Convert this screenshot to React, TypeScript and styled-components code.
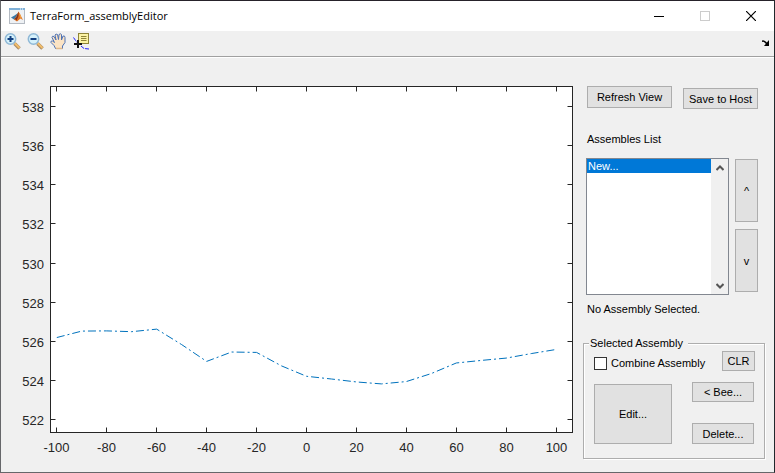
import React, { useState } from "react";
import styled, { createGlobalStyle } from "styled-components";

const face = "#f0f0f0";
const uiFont = `"Liberation Sans", Arial, sans-serif`;

const GlobalStyle = createGlobalStyle`
  * { box-sizing: border-box; }
  body { margin: 0; background: ${face}; }
`;

const Window = styled.div`
  display: flex;
  flex-direction: column;
  min-height: 100vh;
  background: ${face};
  border: 1px solid #66676a;
  border-top-color: #26222a;
  border-right-color: #20282c;
  font: 11px/14px ${uiFont};
  color: #000;
`;

const TitleBar = styled.header`
  display: flex;
  align-items: center;
  height: 30px;
  padding-left: 8px;
  background: #fff;
`;

const Title = styled.h1`
  flex: 1;
  margin: 0 0 0 5px;
  font: 11px/16px "Open Sans", "Noto Sans", sans-serif;
`;

const CaptionButton = styled.button`
  display: grid;
  place-items: center;
  width: 46px;
  height: 30px;
  padding: 0;
  border: 0;
  background: none;
`;

const Toolbar = styled.div`
  display: flex;
  align-items: center;
  gap: 6px;
  height: 26px;
  padding: 0 5px 4px 3px;
  border-bottom: 1px solid #a0a0a0;
  box-shadow: 0 1px 0 #fff;
`;

const ToolButton = styled.button<{ $end?: boolean }>`
  display: grid;
  place-items: center;
  padding: 0;
  border: 0;
  background: none;
  margin-left: ${(p) => (p.$end ? "auto" : "0")};
`;

const Body = styled.main`
  display: flex;
  flex: 1;
`;

const ChartPane = styled.section`
  flex: 1;
  min-width: 0;
  padding-top: 2px;
`;

const ChartSvg = styled.svg`
  display: block;
  width: 100%;
  height: auto;
`;

const TickText = styled.text`
  font: 13px ${uiFont};
  fill: #262626;
`;

const Side = styled.aside`
  width: 191px;
  padding: 29px 9px 12px 0;
`;

const PushButton = styled.button<{ $w: number; $h: number }>`
  width: ${(p) => p.$w}px;
  height: ${(p) => p.$h}px;
  padding: 0;
  border: 1px solid #adadad;
  background: #e1e1e1;
  color: #000;
  font: 11px/14px ${uiFont};
  white-space: nowrap;
`;

const TopButtons = styled.div`
  display: flex;
  align-items: flex-end;
  justify-content: space-between;
  height: 23px;
  padding: 0 7px 0 4px;
`;

const TopSlot = styled.div`
  align-self: flex-start;
  display: flex;
`;

const ListLabel = styled.label`
  display: block;
  margin: 23px 0 12px 4px;
`;

const ListRow = styled.div`
  display: flex;
  align-items: flex-start;
  justify-content: space-between;
  padding: 0 7px 0 3px;
`;

const ListFrame = styled.div`
  display: flex;
  width: 143px;
  height: 137px;
  border: 1px solid #828790;
  background: #fff;
`;

const ListBox = styled.select`
  flex: 1;
  min-width: 0;
  height: 100%;
  padding: 0;
  border: 0;
  outline: 0;
  border-radius: 0;
  background: #fff;
  overflow: hidden;
  font: 11px/14px ${uiFont};

  option {
    min-height: 14px;
    padding: 1px 1px 0;
  }

  option:checked {
    background-image: linear-gradient(#0078d7, #0078d7);
    -webkit-text-fill-color: #fff;
  }
`;

const ScrollTrack = styled.div`
  display: flex;
  flex-direction: column;
  justify-content: space-between;
  width: 17px;
  background: ${face};
`;

const ScrollButton = styled.button`
  display: grid;
  place-items: center;
  width: 17px;
  height: 17px;
  padding: 0;
  border: 0;
  background: none;
`;

const OrderButtons = styled.div`
  display: flex;
  flex-direction: column;
  gap: 7px;
  padding-top: 1px;
`;

const Status = styled.p`
  margin: 7px 0 20px 4px;
`;

const Group = styled.fieldset`
  min-width: 0;
  margin: 0;
  padding: 1px 9px 14px 10px;
  border: 1px solid #adadad;
  box-shadow: 1px 1px 0 #fff, inset 1px 1px 0 #fff;
`;

const Legend = styled.legend`
  margin-left: -5px;
  padding: 0 5px 0 1px;
  background: ${face};
`;

const GroupRow = styled.div`
  display: flex;
  align-items: center;
  justify-content: space-between;
`;

const CheckLabel = styled.label`
  display: flex;
  align-items: center;
  gap: 4px;
  padding-top: 4px;
  white-space: nowrap;
`;

const CheckBox = styled.input`
  appearance: none;
  width: 13px;
  height: 13px;
  margin: 0;
  border: 1px solid #333;
  background: #fff;

  &:checked {
    background: #333;
    box-shadow: inset 0 0 0 2px #fff;
  }
`;

const ActionRow = styled.div`
  display: flex;
  justify-content: space-between;
  align-items: flex-end;
  margin-top: 11px;
  padding-right: 1px;
`;

const ActionColumn = styled.div`
  display: flex;
  flex-direction: column;
  gap: 21px;
`;

const values = [
  526.19, 526.52, 526.53, 526.49, 526.62, 525.83, 524.97, 525.45, 525.43,
  524.74, 524.21, 524.07, 523.92, 523.82, 523.94, 524.35, 524.89, 525.02,
  525.14, 525.37, 525.58,
];
const plot = { left: 49.5, right: 571.5, top: 27.5, bottom: 373.5 };
const px = (x: number) => 305.5 + x * 2.497;
const py = (y: number) => 360.5 - (y - 522) * 19.56;
const xTicks = [-100, -80, -60, -40, -20, 0, 20, 40, 60, 80, 100];
const yTicks = [522, 524, 526, 528, 530, 532, 534, 536, 538];
const snap = (v: number) => Math.floor(v) + 0.5;

function Chart() {
  const points = values.map((v, i) => `${px(i * 10 - 100)},${py(v)}`).join(" ");
  return (
    <ChartSvg viewBox="0 0 582 412" role="img" aria-label="Terrain profile">
      <rect
        x={plot.left}
        y={plot.top}
        width={plot.right - plot.left}
        height={plot.bottom - plot.top}
        fill="#fff"
        stroke="#262626"
      />
      {xTicks.map((t) => {
        const x = snap(px(t));
        return (
          <g key={t}>
            <path
              d={`M${x} ${plot.bottom}v-5M${x} ${plot.top}v5`}
              stroke="#262626"
            />
            <TickText x={x} y={393} textAnchor="middle">
              {t}
            </TickText>
          </g>
        );
      })}
      {yTicks.map((t) => {
        const y = snap(py(t));
        return (
          <g key={t}>
            <path
              d={`M${plot.left} ${y}h5M${plot.right} ${y}h-5`}
              stroke="#262626"
            />
            <TickText x={43} y={y + 5} textAnchor="end">
              {t}
            </TickText>
          </g>
        );
      })}
      <polyline
        points={points}
        fill="none"
        stroke="#0072bd"
        strokeDasharray="8 3 2 3"
      />
    </ChartSvg>
  );
}

function AppIcon() {
  return (
    <svg width="16" height="16" viewBox="0 0 16 16" aria-hidden="true">
      <rect x=".5" y=".5" width="15" height="15" fill="#eef1f4" stroke="#b4bac2" />
      <path d="M0 0h16v2H0z" fill="#7fb0d8" />
      <path d="M11 1h1M13 1h1" stroke="#fff" />
      <path d="M2 9.500 5.500 7.500 9 5 7.500 9 5 11.500z" fill="#3a78a8" />
      <path d="M5 11.500 7 9 9.500 3.500 11 6 14 12 11.500 10.500 8 13.500z" fill="#e0701f" />
      <path d="M9.500 3.500 9.500 8 7.500 12.500 6.500 11.200 5 11.500 7.500 9z" fill="#7c3020" />
      <path d="M10 5 11 9 13 11.500 11 6z" fill="#f5a94a" />
    </svg>
  );
}

function ZoomIcon({ plus }: { plus?: boolean }) {
  return (
    <svg width="17" height="17" viewBox="0 0 17 17" aria-hidden="true">
      <path d="M10.500 10.500 15.500 15.500" stroke="#a88a62" strokeWidth="3.500" />
      <path d="M10.500 10 15.500 15" stroke="#f2bd6a" strokeWidth="2" />
      <circle cx="6.500" cy="6" r="5.200" fill="#d5f1fb" stroke="#8fb8d6" strokeWidth="1.500" />
      <path
        d={plus ? "M3.500 6h6M6.500 3v6" : "M3.500 6h6"}
        stroke="#123f80"
        strokeWidth="2"
      />
    </svg>
  );
}

function HandIcon() {
  return (
    <svg width="17" height="17" viewBox="0 0 17 17" aria-hidden="true">
      <path
        d="M5.500 15.500 4 12.500 1 9.500Q.5 7.500 2.500 8L4.500 9.500 2 4.500Q2 2.500 4 3.500L6 7 5 2Q6 .5 7.500 1.500L8.500 6.500 9 1.500Q10.500 0 11.500 1.500L11.500 7 13 3Q15 2.500 15 4.500L15 9.500 12.500 13 12.500 15.500z"
        fill="#fbe3c4"
        stroke="#4f73b5"
      />
      <path d="M6 15.500h6.500" stroke="#e0b98c" strokeWidth="1.500" />
    </svg>
  );
}

function DataCursorIcon() {
  return (
    <svg width="17" height="17" viewBox="0 0 17 17" aria-hidden="true">
      <path
        d="M.5 4.500 4 9.500M8 13 11 15.500 16 16"
        fill="none"
        stroke="#2020ff"
        strokeDasharray="4 1"
      />
      <rect x="5.500" y=".5" width="10" height="10" fill="#fbf3a4" stroke="#8f8538" />
      <path d="M8 3.500h5.500M8 5.500h5.500M8 7.500h5.500" stroke="#8f8538" />
      <path d="M5 7v8M1 11h8" stroke="#111" strokeWidth="2" />
    </svg>
  );
}

export default function App() {
  const [combine, setCombine] = useState(false);
  return (
    <>
      <GlobalStyle />
      <Window>
        <TitleBar>
          <AppIcon />
          <Title>TerraForm_assemblyEditor</Title>
          <CaptionButton aria-label="Minimize">
            <svg width="10" height="10" viewBox="0 0 10 10">
              <path d="M0 5.500h10" stroke="#000" />
            </svg>
          </CaptionButton>
          <CaptionButton aria-label="Maximize" disabled>
            <svg width="10" height="10" viewBox="0 0 10 10">
              <rect x=".5" y=".5" width="9" height="9" fill="none" stroke="#ccc" />
            </svg>
          </CaptionButton>
          <CaptionButton aria-label="Close">
            <svg width="10" height="10" viewBox="0 0 10 10">
              <path d="M0 0 10 10M10 0 0 10" stroke="#000" strokeWidth="1.200" />
            </svg>
          </CaptionButton>
        </TitleBar>
        <Toolbar role="toolbar" aria-label="Figure tools">
          <ToolButton aria-label="Zoom in">
            <ZoomIcon plus />
          </ToolButton>
          <ToolButton aria-label="Zoom out">
            <ZoomIcon />
          </ToolButton>
          <ToolButton aria-label="Pan">
            <HandIcon />
          </ToolButton>
          <ToolButton aria-label="Data cursor">
            <DataCursorIcon />
          </ToolButton>
          <ToolButton $end aria-label="Dock figure">
            <svg width="7" height="9" viewBox="0 0 7 9">
              <path d="M0 4.500Q2 3 5 7" fill="none" stroke="#000" strokeWidth="1.500" />
              <path d="M7 3V9H2z" fill="#000" />
            </svg>
          </ToolButton>
        </Toolbar>
        <Body>
          <ChartPane>
            <Chart />
          </ChartPane>
          <Side>
            <TopButtons>
              <TopSlot>
                <PushButton $w={85} $h={22}>Refresh View</PushButton>
              </TopSlot>
              <PushButton $w={75} $h={21}>Save to Host</PushButton>
            </TopButtons>
            <ListLabel htmlFor="assemblies">Assembles List</ListLabel>
            <ListRow>
              <ListFrame>
                <ListBox id="assemblies" size={9} defaultValue="new">
                  <option value="new">New...</option>
                </ListBox>
                <ScrollTrack>
                  <ScrollButton aria-label="Scroll up">
                    <svg width="8" height="6" viewBox="0 0 8 6">
                      <path d="M.5 5 4 1.500 7.500 5" fill="none" stroke="#555" strokeWidth="2" />
                    </svg>
                  </ScrollButton>
                  <ScrollButton aria-label="Scroll down">
                    <svg width="8" height="6" viewBox="0 0 8 6">
                      <path d="M.5 1 4 4.500 7.500 1" fill="none" stroke="#555" strokeWidth="2" />
                    </svg>
                  </ScrollButton>
                </ScrollTrack>
              </ListFrame>
              <OrderButtons>
                <PushButton $w={23} $h={63}>^</PushButton>
                <PushButton $w={23} $h={63}>v</PushButton>
              </OrderButtons>
            </ListRow>
            <Status>No Assembly Selected.</Status>
            <Group>
              <Legend>Selected Assembly</Legend>
              <GroupRow>
                <CheckLabel>
                  <CheckBox
                    type="checkbox"
                    checked={combine}
                    onChange={(e) => setCombine(e.target.checked)}
                  />
                  Combine Assembly
                </CheckLabel>
                <PushButton $w={33} $h={20}>CLR</PushButton>
              </GroupRow>
              <ActionRow>
                <PushButton $w={78} $h={60}>Edit...</PushButton>
                <ActionColumn>
                  <PushButton $w={62} $h={20}>&lt; Bee...</PushButton>
                  <PushButton $w={62} $h={21}>Delete...</PushButton>
                </ActionColumn>
              </ActionRow>
            </Group>
          </Side>
        </Body>
      </Window>
    </>
  );
}
